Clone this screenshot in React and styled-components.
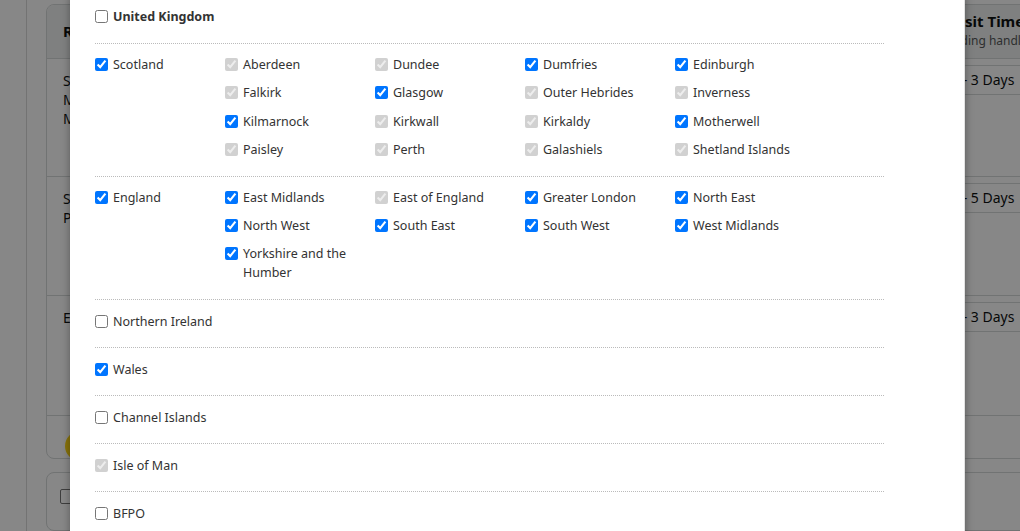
import styled, { createGlobalStyle } from "styled-components";

const GlobalStyle = createGlobalStyle`
  html, body {
    margin: 0;
    padding: 0;
  }
  body {
    width: 1020px;
    height: 531px;
    overflow: hidden;
    background: #fff;
    color: #0f1111;
    font-family: "Noto Sans", "Liberation Sans", Arial, sans-serif;
  }
`;

const scotland = [
  ["Aberdeen", "off"], ["Dundee", "off"], ["Dumfries", "on"], ["Edinburgh", "on"],
  ["Falkirk", "off"], ["Glasgow", "on"], ["Outer Hebrides", "off"], ["Inverness", "off"],
  ["Kilmarnock", "on"], ["Kirkwall", "off"], ["Kirkaldy", "off"], ["Motherwell", "on"],
  ["Paisley", "off"], ["Perth", "off"], ["Galashiels", "off"], ["Shetland Islands", "off"],
];

const england = [
  ["East Midlands", "on"], ["East of England", "off"], ["Greater London", "on"], ["North East", "on"],
  ["North West", "on"], ["South East", "on"], ["South West", "on"], ["West Midlands", "on"],
  ["Yorkshire and the Humber", "on"],
];

const regions = [
  { name: "Scotland", state: "on", subs: scotland },
  { name: "England", state: "on", subs: england },
  { name: "Northern Ireland", state: "none" },
  { name: "Wales", state: "on" },
  { name: "Channel Islands", state: "none" },
  { name: "Isle of Man", state: "off" },
  { name: "BFPO", state: "none", last: true },
];

function Check({ label, state, bold }) {
  return (
    <Item $bold={bold}>
      <Box
        type="checkbox"
        defaultChecked={state !== "none"}
        disabled={state === "off"}
      />
      <span>{label}</span>
    </Item>
  );
}

function App() {
  return (
    <Page>
      <GlobalStyle />
      <Rail />
      <Main>
        <Card>
          <HeadRow>
            <FirstCell>
              <b>Region</b>
            </FirstCell>
            <TimeCell>
              <HeadTitle>Transit Time</HeadTitle>
              <HeadNote>(excluding handling time)</HeadNote>
            </TimeCell>
          </HeadRow>
          <BodyRow $h={118}>
            <FirstCell>
              Scotland, Highlands
              <br />
              Mainland
              <br />
              Mainland
            </FirstCell>
            <TimeCell>
              <DaysBox>2 - 3 Days</DaysBox>
            </TimeCell>
          </BodyRow>
          <BodyRow $h={119}>
            <FirstCell>
              Scottish islands
              <br />
              Perth
            </FirstCell>
            <TimeCell>
              <DaysBox>3 - 5 Days</DaysBox>
            </TimeCell>
          </BodyRow>
          <BodyRow $h={120}>
            <FirstCell>England</FirstCell>
            <TimeCell>
              <DaysBox>2 - 3 Days</DaysBox>
            </TimeCell>
          </BodyRow>
          <CardFooter>
            <YellowButton>Save</YellowButton>
          </CardFooter>
        </Card>
        <NextCard>
          <SmallBox />
        </NextCard>
      </Main>

      <Overlay />

      <Modal>
        <Section $top>
          <Check label="United Kingdom" state="none" bold />
        </Section>
        {regions.map((r) => (
          <Section key={r.name} $last={r.last} $simple={!r.subs}>
            {r.subs ? (
              <RegionGrid>
                <Check label={r.name} state={r.state} />
                <SubGrid>
                  {r.subs.map(([n, s]) => (
                    <Check key={n} label={n} state={s} />
                  ))}
                </SubGrid>
              </RegionGrid>
            ) : (
              <Check label={r.name} state={r.state} />
            )}
          </Section>
        ))}
      </Modal>
    </Page>
  );
}

const Page = styled.div`
  position: relative;
  display: flex;
  width: 1020px;
  height: 531px;
  overflow: hidden;
`;

const Rail = styled.div`
  width: 26px;
  flex-shrink: 0;
  border-right: 1px solid #d9d9d9;
`;

const Main = styled.div`
  padding: 4px 0 0 19px;
  display: flex;
  flex-direction: column;
  gap: 13px;
`;

const Card = styled.div`
  width: 1100px;
  border: 1px solid #d5d9d9;
  border-radius: 8px;
  overflow: hidden;
`;

const HeadRow = styled.div`
  display: flex;
  height: 53px;
  background: #f0f2f2;
  border-bottom: 1px solid #d5d9d9;
  font-size: 14px;
`;

const BodyRow = styled.div`
  display: flex;
  height: ${(p) => p.$h - 1}px;
  border-bottom: 1px solid #d5d9d9;
  font-size: 14px;
  line-height: 19px;
`;

const FirstCell = styled.div`
  width: 868px;
  padding: 12px 16px;
  box-sizing: border-box;
  display: flex;
  flex-direction: column;
  justify-content: flex-start;

  b {
    margin-top: 4px;
    font-size: 15px;
  }
`;

const TimeCell = styled.div`
  flex: 1;
  padding-top: 6px;
  display: flex;
  flex-direction: column;
`;

const HeadTitle = styled.div`
  font-size: 15px;
  font-weight: 700;
  line-height: 22px;
  margin: -1px 0 0 17px;
  white-space: nowrap;
`;

const HeadNote = styled.div`
  font-size: 12px;
  line-height: 18px;
  color: #565959;
  margin-left: 13px;
  white-space: nowrap;
`;

const DaysBox = styled.div`
  height: 28px;
  line-height: 28px;
  padding-left: 80px;
  margin-left: -44px;
  border-top: 1px solid #d5d9d9;
  border-bottom: 1px solid #d5d9d9;
  font-size: 14px;
  white-space: nowrap;
`;

const CardFooter = styled.div`
  height: 59px;
  padding: 15px 18px;
  box-sizing: border-box;
`;

const YellowButton = styled.div`
  width: 120px;
  height: 30px;
  border-radius: 15px;
  background: #ffd814;
  font-size: 13px;
  line-height: 30px;
  text-align: center;
`;

const NextCard = styled.div`
  width: 1100px;
  height: 60px;
  border: 1px solid #d5d9d9;
  border-radius: 8px;
  padding: 16px 13px;
  box-sizing: border-box;
`;

const SmallBox = styled.div`
  width: 13px;
  height: 13px;
  border: 1px solid #767676;
  border-radius: 2px;
`;

const Overlay = styled.div`
  position: absolute;
  inset: 0;
  background: rgba(0, 0, 0, 0.47);
`;

const Modal = styled.div`
  position: absolute;
  left: 70px;
  top: -4px;
  bottom: -40px;
  width: 895px;
  box-sizing: border-box;
  padding: 0 80px 0 25px;
  background: #fff;
  border-right: 1px solid #e3e3e3;
  box-shadow: 0 0 8px rgba(0, 0, 0, 0.35);
`;

const Section = styled.div`
  padding: ${(p) => (p.$simple ? "12px 0 16px" : "11px 0 17px")};
  border-bottom: ${(p) => (p.$last ? "none" : "1px dotted #bbbbbb")};
`;

const RegionGrid = styled.div`
  display: grid;
  grid-template-columns: 130px 600px;
  align-items: start;
`;

const SubGrid = styled.div`
  display: grid;
  grid-template-columns: repeat(4, 150px);
  row-gap: 9.25px;
`;

const Item = styled.label`
  display: flex;
  align-items: flex-start;
  gap: 5px;
  font-size: 12.5px;
  line-height: 19px;
  color: #333;
  font-weight: ${(p) => (p.$bold ? 700 : 400)};
`;

const Box = styled.input`
  width: 13px;
  height: 13px;
  margin: 3px 0 0;
  flex-shrink: 0;
`;

export default App;
